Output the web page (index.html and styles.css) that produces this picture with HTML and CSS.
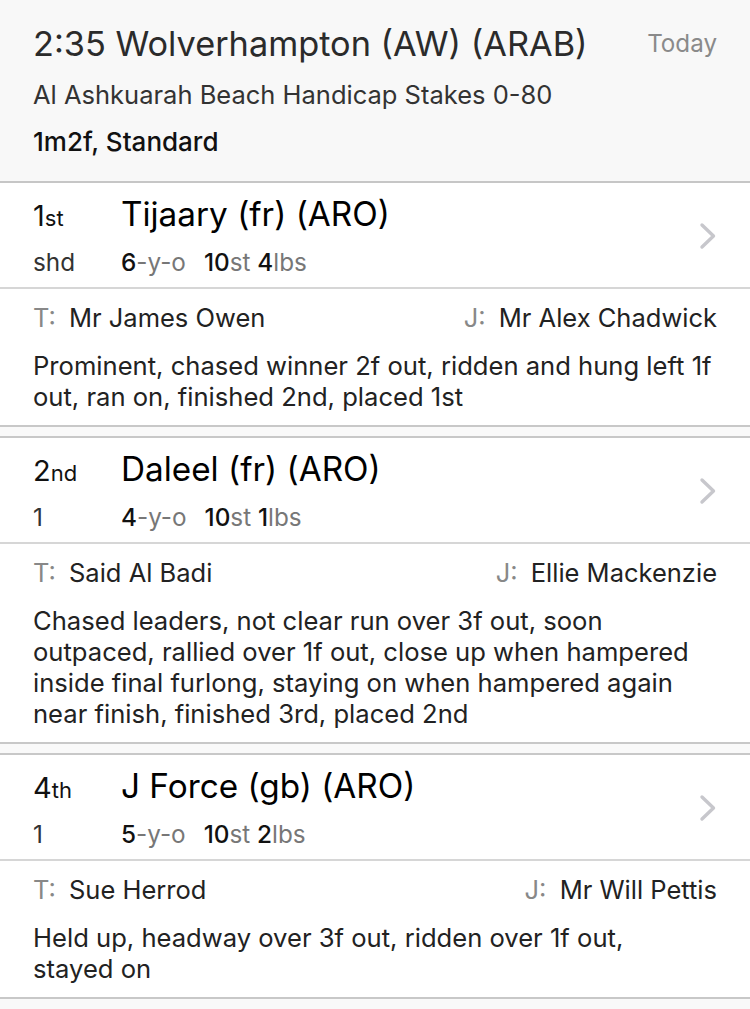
FILE: index.html
```html
<!DOCTYPE html>
<html>
<head>
<meta charset="utf-8">
<link rel="stylesheet" href="styles.css">
</head>
<body>
<div class="header">
  <div class="title-line"><span class="title">2:35 Wolverhampton (AW) (ARAB)</span><span class="today">Today</span></div>
  <div class="subtitle">Al Ashkuarah Beach Handicap Stakes 0-80</div>
  <div class="distance">1m2f, Standard</div>
</div>

<div class="entry first">
  <div class="row">
    <div class="row-main">
      <div class="line1"><span class="pos">1<span class="suffix">st</span></span><span class="name">Tijaary (fr) (ARO)</span></div>
      <div class="line2"><span class="margin">shd</span><span class="stats"><b>6</b>-y-o<span class="sp"></span><b>10</b>st <b>4</b>lbs</span></div>
    </div>
    <svg class="chev" width="18" height="28" viewBox="0 0 18 28"><path d="M3 3 L14.5 14 L3 25" fill="none" stroke="#c7c7cc" stroke-width="3.4" stroke-linecap="round" stroke-linejoin="round"/></svg>
  </div>
  <div class="details">
    <div class="people"><span><span class="lbl">T:</span> Mr James Owen</span><span><span class="lbl">J:</span> Mr Alex Chadwick</span></div>
    <div class="comment">Prominent, chased winner 2f out, ridden and hung left 1f out, ran on, finished 2nd, placed 1st</div>
  </div>
</div>

<div class="entry">
  <div class="row">
    <div class="row-main">
      <div class="line1"><span class="pos">2<span class="suffix">nd</span></span><span class="name">Daleel (fr) (ARO)</span></div>
      <div class="line2"><span class="margin">1</span><span class="stats"><b>4</b>-y-o<span class="sp"></span><b>10</b>st <b>1</b>lbs</span></div>
    </div>
    <svg class="chev" width="18" height="28" viewBox="0 0 18 28"><path d="M3 3 L14.5 14 L3 25" fill="none" stroke="#c7c7cc" stroke-width="3.4" stroke-linecap="round" stroke-linejoin="round"/></svg>
  </div>
  <div class="details">
    <div class="people"><span><span class="lbl">T:</span> Said Al Badi</span><span><span class="lbl">J:</span> Ellie Mackenzie</span></div>
    <div class="comment">Chased leaders, not clear run over 3f out, soon outpaced, rallied over 1f out, close up when hampered inside final furlong, staying on when hampered again near finish, finished 3rd, placed 2nd</div>
  </div>
</div>

<div class="entry">
  <div class="row">
    <div class="row-main">
      <div class="line1"><span class="pos">4<span class="suffix">th</span></span><span class="name">J Force (gb) (ARO)</span></div>
      <div class="line2"><span class="margin">1</span><span class="stats"><b>5</b>-y-o<span class="sp"></span><b>10</b>st <b>2</b>lbs</span></div>
    </div>
    <svg class="chev" width="18" height="28" viewBox="0 0 18 28"><path d="M3 3 L14.5 14 L3 25" fill="none" stroke="#c7c7cc" stroke-width="3.4" stroke-linecap="round" stroke-linejoin="round"/></svg>
  </div>
  <div class="details">
    <div class="people"><span><span class="lbl">T:</span> Sue Herrod</span><span><span class="lbl">J:</span> Mr Will Pettis</span></div>
    <div class="comment">Held up, headway over 3f out, ridden over 1f out,<br>stayed on</div>
  </div>
</div>
</body>
</html>
```

FILE: styles.css
```css
* { box-sizing: border-box; }
html, body {
  margin: 0;
  padding: 0;
}
body {
  background: #f9f9f9;
  font-family: Inter, Roboto, "Liberation Sans", sans-serif;
  color: #222;
  width: 750px;
  overflow: hidden;
}
.header {
  background: #f8f8f8;
  height: 183px;
  padding: 22px 33px 0 33px;
  border-bottom: 2px solid #c6c6c6;
}
.title-line {
  display: flex;
  justify-content: space-between;
  align-items: center;
  height: 44px;
  line-height: 44px;
}
.title {
  font-size: 34.3px;
  color: #2b2b2b;
}
.today {
  font-size: 24.2px;
  color: #8a8a8a;
}
.subtitle {
  margin-top: 11px;
  font-size: 25.5px;
  line-height: 36px;
  color: #333;
}
.distance {
  margin-top: 11px;
  font-size: 26px;
  line-height: 36px;
  font-weight: 500;
  color: #111;
}
.entry {
  background: #fff;
  border-top: 2px solid #c8c8c8;
  border-bottom: 2px solid #c8c8c8;
  margin-bottom: 9px;
}
.entry.first {
  border-top: none;
}
.row {
  height: 106px;
  display: flex;
  align-items: center;
  padding: 11px 33px 10px 33px;
  border-bottom: 2px solid #d6d6d6;
}
.row-main {
  flex: 1;
  display: flex;
  flex-direction: column;
  gap: 13px;
}
.line1 {
  display: flex;
  align-items: baseline;
  height: 40px;
  line-height: 40px;
}
.pos {
  width: 88px;
  font-size: 29px;
  color: #111;
}
.suffix {
  font-size: 22px;
}
.name {
  font-size: 33.3px;
  color: #000;
}
.line2 {
  display: flex;
  align-items: baseline;
  height: 30px;
  line-height: 30px;
  font-size: 24.3px;
}
.margin {
  width: 88px;
  color: #333;
}
.stats {
  color: #777;
}
.stats b {
  font-weight: 500;
  color: #111;
}
.sp {
  display: inline-block;
  width: 18px;
}
.chev {
  display: block;
  margin-top: 1px;
}
.details {
  padding: 13px 33px 13px 33px;
}
.people {
  display: flex;
  justify-content: space-between;
  font-size: 25.5px;
  line-height: 31px;
  color: #222;
}
.lbl {
  color: #888;
  margin-right: 6px;
}
.comment {
  margin-top: 17px;
  font-size: 25.6px;
  line-height: 31px;
  color: #222;
}
```
